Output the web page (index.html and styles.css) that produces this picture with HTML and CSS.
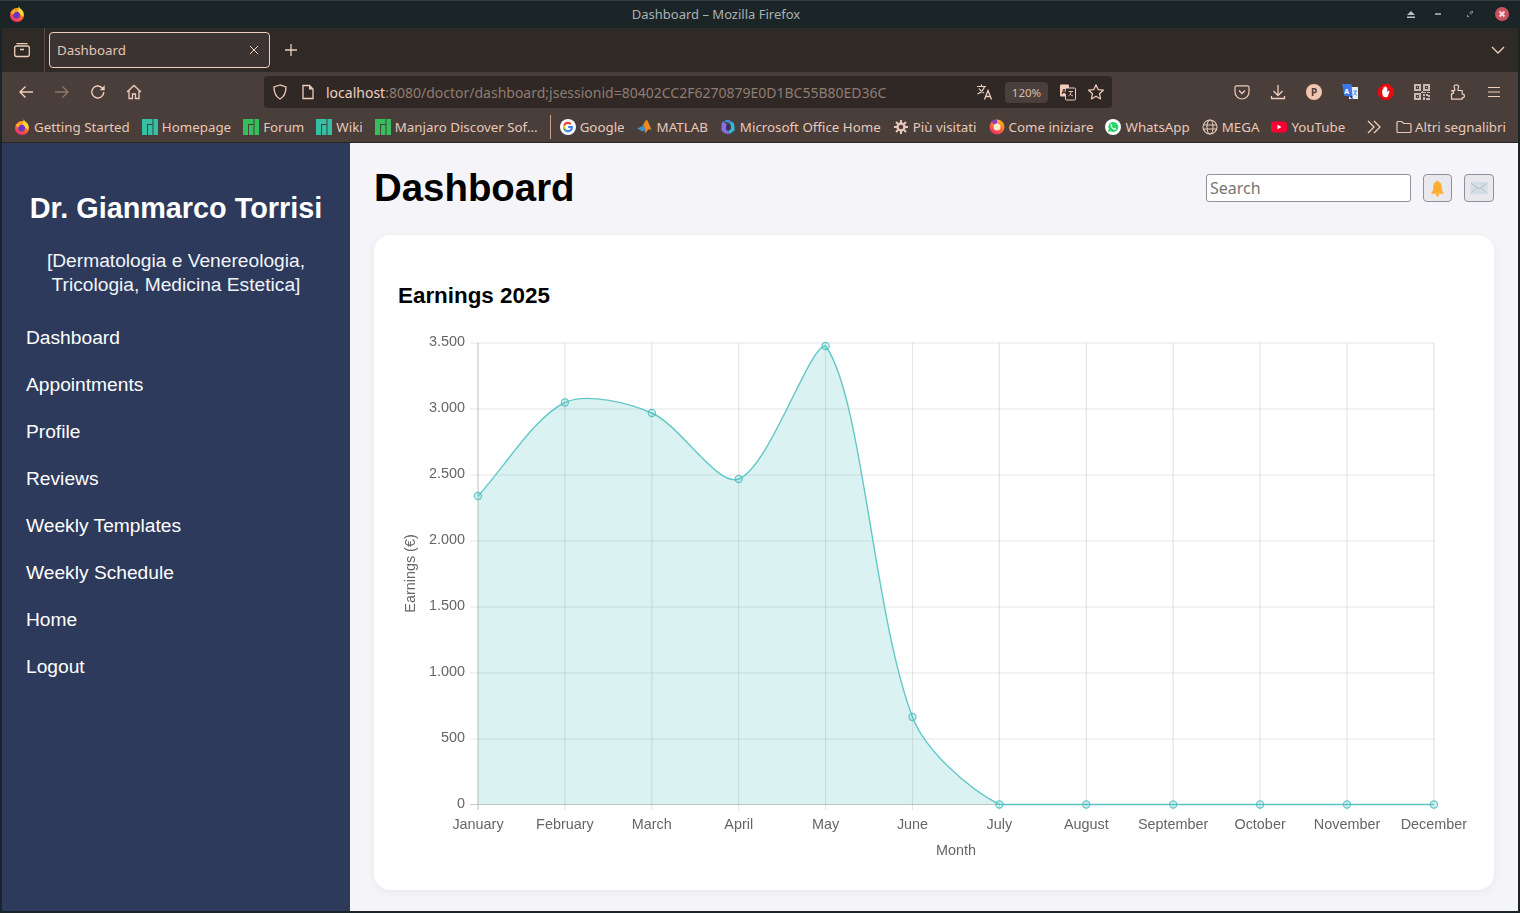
FILE: index.html
```html
<!DOCTYPE html>
<html lang="en">
<head>
<meta charset="utf-8">
<title>Dashboard</title>
<link rel="stylesheet" href="styles.css">
</head>
<body>
<svg class="defs" width="0" height="0" aria-hidden="true">
  <defs>
    <linearGradient id="ffg" x1="0.8" y1="0" x2="0.3" y2="1"><stop offset="0" stop-color="#ffc021"/><stop offset="0.55" stop-color="#ff6a2a"/><stop offset="1" stop-color="#ea2a78"/></linearGradient>
    <symbol id="firefox" viewBox="0 0 16 16">
      <circle cx="8" cy="9" r="7" fill="url(#ffg)"/>
      <path d="M9.500 0.300c.8 2 3.700 3 4.700 6 .6 2 .4 3-.2 4.500L9 6z" fill="#ffd43a"/>
      <circle cx="7.600" cy="9.200" r="3.400" fill="#6a35c4"/>
      <path d="M1.500 6.500C3 4.800 5.500 4.200 8 5.300 6 5.700 5.300 6.600 5 7.800 3.600 8 2.400 7.500 1.500 6.500z" fill="#ffb02e"/>
    </symbol>
    <symbol id="manjaro" viewBox="0 0 16 16">
      <path d="M0 0h10.5v5H5v11H0zM6 6h4.500v10H6zM11.500 0H16v16h-4.500z"/>
    </symbol>
  </defs>
</svg>
<div class="window">
  <header class="titlebar">
    <svg class="ico16 title-logo"><use href="#firefox"/></svg>
    <span class="title-text">Dashboard – Mozilla Firefox</span>
    <div class="winbtns">
      <svg class="winbtn eject" viewBox="0 0 16 16"><path d="M8 5l4 4H4zM4 10.500h8V12H4z" fill="#b4c2c2"/></svg>
      <svg class="winbtn" viewBox="0 0 16 16"><path d="M5 7.300h6v1.500H5z" fill="#b4c2c2"/></svg>
      <svg class="winbtn" viewBox="0 0 16 16"><path d="M8.500 5H11v2.500zM5 8.500V11h2.500z" fill="#8d9a9a"/><path d="M7 7l2-2 2 2-2 2z" fill="#59605f"/></svg>
      <svg class="winbtn" viewBox="0 0 16 16"><circle cx="8" cy="8" r="7" fill="#c9525f"/><path d="M5.500 5.500l5 5m0-5l-5 5" stroke="#f4dfe0" stroke-width="1.800"/></svg>
    </div>
  </header>

  <div class="tabbar">
    <div class="tabs-side">
      <svg class="ico18" viewBox="0 0 18 18"><g fill="none" stroke="currentColor" stroke-width="1.300"><rect x="1.700" y="5" width="14.600" height="10.500" rx="2"/><path d="M3.500 2.700h11M7 8.500h4"/></g></svg>
    </div>
    <div class="tab">
      <span class="tab-label">Dashboard</span>
      <svg class="tab-close" viewBox="0 0 10 10"><path d="M1 1l8 8m0-8l-8 8" stroke="currentColor" stroke-width="1"/></svg>
    </div>
    <svg class="newtab" viewBox="0 0 14 14"><path d="M7 1v12M1 7h12" stroke="currentColor" stroke-width="1.300"/></svg>
    <svg class="tab-list" viewBox="0 0 14 10"><path d="M1 2l6 6 6-6" fill="none" stroke="currentColor" stroke-width="1.300"/></svg>
  </div>

  <div class="navbar">
    <span class="navbtn"><svg class="ico16" viewBox="0 0 16 16"><path d="M15 8H2M7.500 2.500L2 8l5.500 5.500" fill="none" stroke="currentColor" stroke-width="1.400"/></svg></span>
    <span class="navbtn dim"><svg class="ico16" viewBox="0 0 16 16"><path d="M1 8h13M8.500 2.500L14 8l-5.500 5.500" fill="none" stroke="currentColor" stroke-width="1.400"/></svg></span>
    <span class="navbtn"><svg class="ico16" viewBox="0 0 16 16"><path d="M13.800 8a6 6 0 1 1-1.800-4.300L14 5.500" fill="none" stroke="currentColor" stroke-width="1.400"/><path d="M14.700 1.200v5h-5z" fill="currentColor"/></svg></span>
    <span class="navbtn"><svg class="ico16" viewBox="0 0 16 16"><path d="M1 8l7-6.500L15 8M3 6.500V14.500h3.500V10h3v4.500H13V6.500" fill="none" stroke="currentColor" stroke-width="1.300"/></svg></span>
    <div class="urlbar">
      <svg class="ico16 url-shield" viewBox="0 0 16 16"><path d="M8 1L2 3c0 6 1.500 9.500 6 12 4.500-2.500 6-6 6-12z" fill="none" stroke="currentColor" stroke-width="1.300"/></svg>
      <svg class="ico16 url-page" viewBox="0 0 16 16"><path d="M3 1.500h6.500L13 5v9.500H3z" fill="none" stroke="currentColor" stroke-width="1.300"/><path d="M9 1.500V5.500h4z" fill="currentColor"/></svg>
      <span class="url-text">localhost<span class="url-rest">:8080/doctor/dashboard;jsessionid=80402CC2F6270879E0D1BC55B80ED36C</span></span>
      <svg class="ico18 url-trans" viewBox="0 0 18 18"><path d="M1 3.500h9M5.500 1.500v2M8.500 3.500c-1 3.500-3.500 6-7 7.500M3 5.500c1 2 3 3.500 5 4.500" fill="none" stroke="currentColor" stroke-width="1.200"/><path d="M8.500 16.500l3.500-9 3.500 9M10 13.500h4" fill="none" stroke="currentColor" stroke-width="1.300"/></svg>
      <span class="zoom-pill">120%</span>
      <svg class="ico18 url-tr2" viewBox="0 0 18 18"><rect x="1" y="1.500" width="9" height="12" rx="1" fill="currentColor"/><rect x="6.500" y="5" width="10" height="12" rx="1" fill="#302825" stroke="currentColor"/><text class="tr-a" x="2.400" y="10.500">A</text><path d="M9.500 8.500h4.500M12 8.500c0 2.500-1 3.500-2.500 4.500M11 11c.7 1 1.700 1.700 3 2" fill="none" stroke="currentColor" stroke-width=".9"/></svg>
      <svg class="ico18 url-star" viewBox="0 0 18 18"><path d="M9 1.800l2.200 4.800 5.200.6-3.900 3.500 1.100 5.200L9 13.300l-4.600 2.600 1.100-5.200L1.600 7.200l5.200-.6z" fill="none" stroke="currentColor" stroke-width="1.200" stroke-linejoin="round"/></svg>
    </div>
    <div class="nav-right">
      <span class="navbtn"><svg class="ico16" viewBox="0 0 16 16"><path d="M2.500 1.800h11A1.500 1.500 0 0 1 15 3.300V8a7 7 0 0 1-14 0V3.300a1.500 1.500 0 0 1 1.500-1.500z" fill="none" stroke="currentColor" stroke-width="1.200"/><path d="M5 6.500l3 3 3-3" fill="none" stroke="currentColor" stroke-width="1.300"/></svg></span>
      <span class="navbtn"><svg class="ico16" viewBox="0 0 16 16"><path d="M8 1v10M3.500 7L8 11.500 12.500 7M1.500 12v2.500h13V12" fill="none" stroke="currentColor" stroke-width="1.300"/></svg></span>
      <span class="navbtn"><span class="p-badge">P</span></span>
      <span class="navbtn"><svg class="ico18" viewBox="0 0 18 18"><rect x="8" y="4" width="9" height="12" fill="#e8eef8"/><path d="M1 1h9.500l1 12H3.500z" fill="#3b78e7"/><path d="M8 13l3.500 3.500 0-3.500z" fill="#1b3f8f"/><text class="tr-w" x="3.200" y="10.500">A</text><path d="M12.500 8h3.500M14.500 8c0 2-.6 3-2 4M13.300 10c.5 1 1.300 1.600 2.500 2" fill="none" stroke="#3b78e7" stroke-width=".9"/></svg></span>
      <span class="navbtn"><svg class="ico16" viewBox="0 0 16 16"><path d="M5 0h6l5 5v6l-5 5H5l-5-5V5z" fill="#e40d0d"/><path d="M4.200 8.500V6c0-.8 1-.8 1.100 0V3.800c0-.9 1.200-.9 1.300 0V2.800c0-.9 1.300-.9 1.400 0v1c.1-.9 1.300-.9 1.300 0v4.500l1-1.200c.7-.6 1.500 0 1.100.7L9.800 12.500c-.3.500-.7.700-1.300.7H7c-1.800 0-2.800-2-2.800-4.700z" fill="#fff"/></svg></span>
      <span class="navbtn"><svg class="ico16 qr" viewBox="0 0 16 16"><path d="M0 0h7v7H0zM2 2v3h3V2zM9 0h7v7H9zM11 2v3h3V2zM0 9h7v7H0zM2 11v3h3v-3z" fill-rule="evenodd"/><path d="M3 3h1v1H3zM12 3h1v1h-1zM3 12h1v1H3zM8 7h1v2H8zM7 8h1v1H7zM9 8h3v1H9zM13 8h3v1h-3zM9 10h2v2H9zM12 10h2v1h2v2h-2v-1h-2zM9 13h2v3H9zM12 14h4v2h-4z"/></svg></span>
      <span class="navbtn"><svg class="ico16" viewBox="0 0 16 16"><path d="M1.500 6.500h3.200V5c0-1-.6-1.400-.6-2.300C4.100 1.500 5.200.8 6.400.8s2.300.7 2.300 1.900c0 .9-.6 1.300-.6 2.300v1.500h4.100v3.600c1.400 0 2.200.8 2.200 1.800s-.8 1.800-2.200 1.800v1.500H1.500V9.700c1.300 0 2.200-.2 2.200-1.400 0-1.100-.9-1.400-2.200-1.400z" fill="none" stroke="currentColor" stroke-width="1.200" stroke-linejoin="round"/></svg></span>
      <span class="navbtn"><svg class="ico16" viewBox="0 0 16 16"><path d="M2 3.500h12M2 8h12M2 12.500h12" stroke="currentColor" stroke-width="1.200"/></svg></span>
    </div>
  </div>

  <nav class="bookmarks">
    <a class="bm"><svg class="ico16"><use href="#firefox"/></svg>Getting Started</a>
    <a class="bm"><svg class="ico16 mj-teal"><use href="#manjaro"/></svg>Homepage</a>
    <a class="bm"><svg class="ico16 mj-green"><use href="#manjaro"/></svg>Forum</a>
    <a class="bm"><svg class="ico16 mj-teal"><use href="#manjaro"/></svg>Wiki</a>
    <a class="bm"><svg class="ico16 mj-green"><use href="#manjaro"/></svg>Manjaro Discover Sof...</a>
    <span class="bm-sep"></span>
    <a class="bm"><svg class="ico16" viewBox="0 0 16 16"><circle cx="8" cy="8" r="8" fill="#fff"/><path d="M12.800 6.900H8.100v2.200h2.700a2.900 2.900 0 0 1-4.600 1.500L4.500 12a5.100 5.100 0 0 0 8.300-5.100z" fill="#4285f4"/><path d="M4.500 12l1.700-1.400A3 3 0 0 1 5 8.600L3.200 7.200A5.100 5.100 0 0 0 4.500 12z" fill="#34a853"/><path d="M3.200 5.700L5 7.100A3 3 0 0 1 10 5.900l1.600-1.600A5.100 5.100 0 0 0 3.200 5.700z" fill="#ea4335"/><path d="M3 8a5 5 0 0 0 .6 2.300L5.300 9a3 3 0 0 1 0-2L3.600 5.700A5 5 0 0 0 3 8z" fill="#fbbc05"/></svg>Google</a>
    <a class="bm"><svg class="ico16" viewBox="0 0 16 16"><path d="M0 9.500l4-1.800L6 6l3.500 4-3.500 2.800z" fill="#3f8fc4"/><path d="M6 6c1.500-1.700 2.300-5 3.500-5 1.500 0 3 6 5.500 10.500-1.500-1-2.500-1.500-3.500-1C10 12 9 13.500 7.500 14.500 9 10 8 8 6 6z" fill="#f08a1d"/></svg>MATLAB</a>
    <a class="bm"><svg class="ico16" viewBox="0 0 16 16"><path d="M3 2.500L8 .5l5.500 3-4 .5z" fill="#3f8fe0"/><path d="M1.500 4.500v7l3.500 3 5.500.5-3-3V6L3 2.500z" fill="#8c6ee0"/><path d="M9.500 4l4-.5 1 4.500v3.500L10 14.500l-2-2 3-2.500V6.500z" fill="#2dbce0"/><path d="M6 6.500L10 5v5l-4 1.500z" fill="#3a2e6e"/></svg>Microsoft Office Home</a>
    <a class="bm"><svg class="ico16" viewBox="0 0 16 16"><g fill="none" stroke="currentColor"><circle cx="8" cy="8" r="3.500" stroke-width="2.400"/><path d="M8 1v3M8 12v3M1 8h3M12 8h3M3 3l2 2M11 11l2 2M13 3l-2 2M5 11l-2 2" stroke-width="2"/></g></svg>Più visitati</a>
    <a class="bm"><svg class="ico16" viewBox="0 0 16 16"><circle cx="8" cy="8" r="7.500" fill="url(#ffg)"/><path d="M8 .5a7.500 7.500 0 0 0-5.500 2.400L8 8z" fill="#8c3ad0"/><circle cx="8" cy="8" r="3.500" fill="#ffe9cf"/></svg>Come iniziare</a>
    <a class="bm"><svg class="ico16" viewBox="0 0 16 16"><circle cx="8" cy="8" r="8" fill="#fff"/><path d="M3 13l.8-2.800A5 5 0 1 1 5.800 12.300z" fill="#25d366"/><path d="M6 5c-.8.6-.8 1.800 0 3 .8 1.300 2.200 2.500 3.600 2.700.8 0 1.500-.6 1.500-1.300L9.800 8.700l-.8.700C8 9 7.200 8.200 6.800 7.300l.6-.8L6.700 5z" fill="#fff"/></svg>WhatsApp</a>
    <a class="bm"><svg class="ico16" viewBox="0 0 16 16"><g fill="none" stroke="currentColor" stroke-width="1.100"><circle cx="8" cy="8" r="7"/><ellipse cx="8" cy="8" rx="3" ry="7"/><path d="M1.200 6h13.600M1.200 10h13.600"/></g></svg>MEGA</a>
    <a class="bm"><svg class="ico16" viewBox="0 0 16 16"><rect y="2.500" width="16" height="11" rx="3" fill="#ff0033"/><path d="M6.500 5.700L10.500 8l-4 2.300z" fill="#fff"/></svg>YouTube</a>
    <div class="bm-end">
      <svg class="ico16 bm-more" viewBox="0 0 16 16"><path d="M2 2l6 6-6 6M8 2l6 6-6 6" fill="none" stroke="currentColor" stroke-width="1.300"/></svg>
      <a class="bm folder"><svg class="ico16" viewBox="0 0 16 16"><path d="M1 3.500a1 1 0 0 1 1-1h3.800L7.500 4.500H14a1 1 0 0 1 1 1v7a1 1 0 0 1-1 1H2a1 1 0 0 1-1-1z" fill="none" stroke="currentColor" stroke-width="1.200"/></svg>Altri segnalibri</a>
    </div>
  </nav>

  <div class="page">
    <aside class="sidebar">
      <h2 class="doc-name">Dr. Gianmarco Torrisi</h2>
      <p class="doc-spec">[Dermatologia e Venereologia, Tricologia, Medicina Estetica]</p>
      <ul class="menu">
        <li>Dashboard</li>
        <li>Appointments</li>
        <li>Profile</li>
        <li>Reviews</li>
        <li>Weekly Templates</li>
        <li>Weekly Schedule</li>
        <li>Home</li>
        <li>Logout</li>
      </ul>
    </aside>
    <main class="main">
      <div class="topbar">
        <h1 class="page-title">Dashboard</h1>
        <div class="tools">
          <input class="search" type="text" placeholder="Search">
          <button class="tool-btn" type="button"><svg class="bell" viewBox="0 0 16 18"><path d="M8 .5c.8 0 1.100.6 1.100 1.200 2.400.7 3.300 2.700 3.300 5.300 0 3.300.9 5 2.100 6.600v1H1.500v-1c1.200-1.600 2.100-3.300 2.100-6.600 0-2.600.9-4.600 3.300-5.300C6.900 1.100 7.200.5 8 .5z" fill="#ffac33"/><circle cx="8" cy="16" r="1.600" fill="#ffac33"/></svg></button>
          <button class="tool-btn wide" type="button"><svg class="mail" viewBox="0 0 18 14"><rect x=".5" y="1" width="17" height="12" rx="1" fill="#d5dee4"/><path d="M1 2l8 6 8-6M1 12.500l6-6M17 12.500l-6-6" fill="none" stroke="#a9b8c2" stroke-width=".8"/></svg></button>
        </div>
      </div>
      <section class="card">
        <h3 class="card-title">Earnings 2025</h3>
        <svg class="chart" viewBox="398 320 1072 546">
          <g class="grid">
            <path d="M478 343H1434M478 409H1434M478 475H1434M478 541H1434M478 607H1434M478 673H1434M478 739H1434"/>
            <path d="M564.900 343V810M651.800 343V810M738.700 343V810M825.600 343V810M912.500 343V810M999.400 343V810M1086.300 343V810M1173.200 343V810M1260.100 343V810M1347 343V810M1433.900 343V810"/>
            <path d="M470 343H478M470 409H478M470 475H478M470 541H478M470 607H478M470 673H478M470 739H478"/>
          </g>
          <path class="axis" d="M478 343V810M470 804.500H1434"/>
          <path class="area" d="M478 496C504.100 468 534 417.300 564.900 402.500C586.100 392.400 628.600 402.800 651.800 413C680.800 425.800 717.500 487.200 738.700 479C769.600 467.100 810.200 343 825.600 346C862.400 396.400 873.100 613 912.500 717C925.300 750.600 968.800 789.100 999.400 804.500H478Z"/>
          <path class="line" d="M478 496C504.100 468 534 417.300 564.900 402.500C586.100 392.400 628.600 402.800 651.800 413C680.800 425.800 717.500 487.200 738.700 479C769.600 467.100 810.200 343 825.600 346C862.400 396.400 873.100 613 912.500 717C925.300 750.600 968.800 789.100 999.400 804.500H1433.900"/>
          <g class="pts">
            <circle cx="478" cy="496" r="3.600"/><circle cx="564.900" cy="402.500" r="3.600"/><circle cx="651.800" cy="413" r="3.600"/><circle cx="738.700" cy="479" r="3.600"/><circle cx="825.600" cy="346" r="3.600"/><circle cx="912.500" cy="717" r="3.600"/><circle cx="999.400" cy="804.500" r="3.600"/><circle cx="1086.300" cy="804.500" r="3.600"/><circle cx="1173.200" cy="804.500" r="3.600"/><circle cx="1260.100" cy="804.500" r="3.600"/><circle cx="1347" cy="804.500" r="3.600"/><circle cx="1433.900" cy="804.500" r="3.600"/>
          </g>
          <g class="ylabels">
            <text x="465" y="346">3.500</text><text x="465" y="412">3.000</text><text x="465" y="478">2.500</text><text x="465" y="544">2.000</text><text x="465" y="610">1.500</text><text x="465" y="676">1.000</text><text x="465" y="742">500</text><text x="465" y="808">0</text>
          </g>
          <g class="xlabels">
            <text x="478" y="829">January</text><text x="564.900" y="829">February</text><text x="651.800" y="829">March</text><text x="738.700" y="829">April</text><text x="825.600" y="829">May</text><text x="912.500" y="829">June</text><text x="999.400" y="829">July</text><text x="1086.300" y="829">August</text><text x="1173.200" y="829">September</text><text x="1260.100" y="829">October</text><text x="1347" y="829">November</text><text x="1433.900" y="829">December</text>
          </g>
          <text class="xtitle" x="956" y="855">Month</text>
          <text class="ytitle" transform="translate(414.500 573.500) rotate(-90)">Earnings (€)</text>
        </svg>
      </section>
    </main>
  </div>
</div>
</body>
</html>
```

FILE: styles.css
```css
* { box-sizing: border-box; }
html, body { margin: 0; padding: 0; height: 100%; overflow: hidden; }
body { background: #1b2426; font-family: "Noto Sans", sans-serif; }
.defs { position: absolute; }

.window { width: 1520px; height: 913px; display: flex; flex-direction: column; background: #1b2426; padding-bottom: 2px; }
.ico16 { width: 16px; height: 16px; flex: none; display: block; }
.ico18 { width: 18px; height: 18px; flex: none; display: block; }

/* window title */
.titlebar { height: 28px; flex: none; display: flex; align-items: center; justify-content: center; position: relative; border-top: 1px solid #343e40; color: #a9b3b5; font-size: 13px; padding-bottom: 2px; }
.title-logo { position: absolute; left: 9px; top: 5px; }
.title-text { position: relative; left: -44px; }
.winbtns { position: absolute; right: 10px; top: 5px; display: flex; gap: 16px; }
.winbtn { width: 16px; height: 16px; display: block; }
.eject { margin-right: -5px; }

/* tab strip */
.tabbar { height: 44px; flex: none; margin: 0 2px; background: #302a27; color: #f0cdbc; display: flex; align-items: center; position: relative; }
.tabs-side { width: 43px; height: 44px; flex: none; border-right: 1px solid #5a4c45; display: flex; align-items: center; justify-content: center; padding-right: 2px; }
.tab { width: 221px; height: 36px; margin-left: 4px; background: #3b3432; border: 1px solid #f0cdbc; border-radius: 4px; display: flex; align-items: center; justify-content: space-between; padding: 0 10px 0 7px; }
.tab-label { font-size: 13.333px; color: #e3c4b6; }
.tab-close { width: 10px; height: 10px; display: block; }
.newtab { width: 14px; height: 14px; margin-left: 14px; display: block; }
.tab-list { width: 14px; height: 10px; margin-left: auto; margin-right: 13px; display: block; }

/* navigation */
.navbar { height: 40px; flex: none; margin: 0 2px; background: #493e39; color: #f0cdbc; display: flex; align-items: center; padding-left: 6px; }
.navbtn { width: 36px; height: 32px; flex: none; display: flex; align-items: center; justify-content: center; }
.navbtn.dim { opacity: .4; }
.urlbar { width: 848px; height: 32px; margin-left: 112px; flex: none; background: #302825; border-radius: 4px; display: flex; align-items: center; padding-left: 8px; }
.url-page { margin-left: 12px; }
.url-text { margin-left: 10px; font-size: 14px; color: #ecd0c2; white-space: nowrap; width: 648px; }
.url-rest { color: #8f7c72; }
.url-trans { margin-left: 2px; }
.zoom-pill { width: 43px; height: 21px; margin-left: 11px; background: #4a3f3a; border-radius: 4px; font-size: 11.500px; line-height: 21px; text-align: center; color: #d8bdaf; }
.url-tr2 { margin-left: 11px; }
.url-star { margin-left: 10px; }
.tr-a { font: bold 7px "Noto Sans", sans-serif; fill: #302825; }
.tr-w { font: bold 7px "Noto Sans", sans-serif; fill: #fff; }
.nav-right { margin-left: auto; display: flex; padding-right: 6px; }
.p-badge { width: 16px; height: 16px; border-radius: 50%; background: #f2c5ae; color: #493e39; font-size: 10px; font-weight: 700; line-height: 16px; text-align: center; }
.qr { fill: #c9bab1; }

/* bookmarks */
.bookmarks { height: 31px; flex: none; margin: 0 2px; background: #493e39; color: #f0cdbc; border-bottom: 1px solid #2a2422; display: flex; align-items: center; padding: 0 12px; gap: 12px; font-size: 13.333px; white-space: nowrap; }
.bm { display: flex; align-items: center; gap: 4px; color: #e8c8b9; }
.folder { gap: 3px; }
.mj-teal { fill: #35bfa4; }
.mj-green { fill: #35bf5c; }
.bm-sep { width: 1px; height: 24px; background: #c9a38e; margin: 0 -3px 0 0; }
.bm-end { margin-left: auto; display: flex; align-items: center; gap: 14px; }

/* page */
.page { flex: 1; min-height: 0; margin: 0 2px; display: flex; background: #f4f4f9; }
.sidebar { width: 348px; flex: none; background: #2d3a5c; color: #fff; padding: 49px 24px 0; font-family: "Liberation Sans", Arial, sans-serif; }
.doc-name { margin: 0; font-size: 28.800px; line-height: 33px; font-weight: 700; text-align: center; }
.doc-spec { margin: 24px 0 0; font-size: 19.200px; line-height: 23.500px; text-align: center; color: #f0f4fa; }
.menu { list-style: none; margin: 18px 0 0; padding: 0; }
.menu li { font-size: 19.200px; line-height: 47px; height: 47px; }

.main { flex: 1; min-width: 0; padding: 23px 24px 0; font-family: "Liberation Sans", Arial, sans-serif; }
.topbar { display: flex; align-items: center; justify-content: space-between; height: 44px; margin-bottom: 25px; }
.page-title { margin: 0; font-size: 38.400px; line-height: 44px; font-weight: 700; color: #000; }
.tools { display: flex; align-items: center; }
.search { width: 205px; height: 28px; border: 1px solid #8f8f9d; border-radius: 3px; background: #fff; padding: 0 3px; font: 16px "Noto Sans", sans-serif; margin-right: 12px; }
.search::placeholder { color: #757575; opacity: 1; }
.tool-btn { width: 29px; height: 28px; border: 1px solid #8f8f9d; border-radius: 4px; background: #e9e9ed; display: flex; align-items: center; justify-content: center; padding: 0; }
.tool-btn.wide { width: 30px; margin-left: 12px; }
.bell { width: 15px; height: 17px; display: block; }
.mail { width: 18px; height: 14px; display: block; }

.card { height: 655px; background: #fff; border-radius: 16px; padding: 48px 24px 24px; box-shadow: 0 2px 10px rgba(0, 0, 0, .06); }
.card-title { margin: 0 0 11px; font-size: 22.400px; line-height: 26px; font-weight: 700; color: #000; }
.chart { width: 1072px; height: 546px; display: block; filter: blur(.3px); font-family: "Liberation Sans", Arial, sans-serif; font-size: 14.400px; fill: #666; }
.grid path { fill: none; stroke: rgba(0, 0, 0, .1); stroke-width: 1.200; }
.axis { fill: none; stroke: rgba(0, 0, 0, .22); stroke-width: 1.200; }
.area { fill: rgba(75, 192, 192, .2); }
.line { fill: none; stroke: #4bc0c0; stroke-opacity: .85; stroke-width: 1.400; }
.pts circle { fill: rgba(75, 192, 192, .2); stroke: #4bc0c0; stroke-opacity: .85; stroke-width: 1.200; }
.ylabels text { text-anchor: end; }
.xlabels text, .xtitle, .ytitle { text-anchor: middle; }
```
